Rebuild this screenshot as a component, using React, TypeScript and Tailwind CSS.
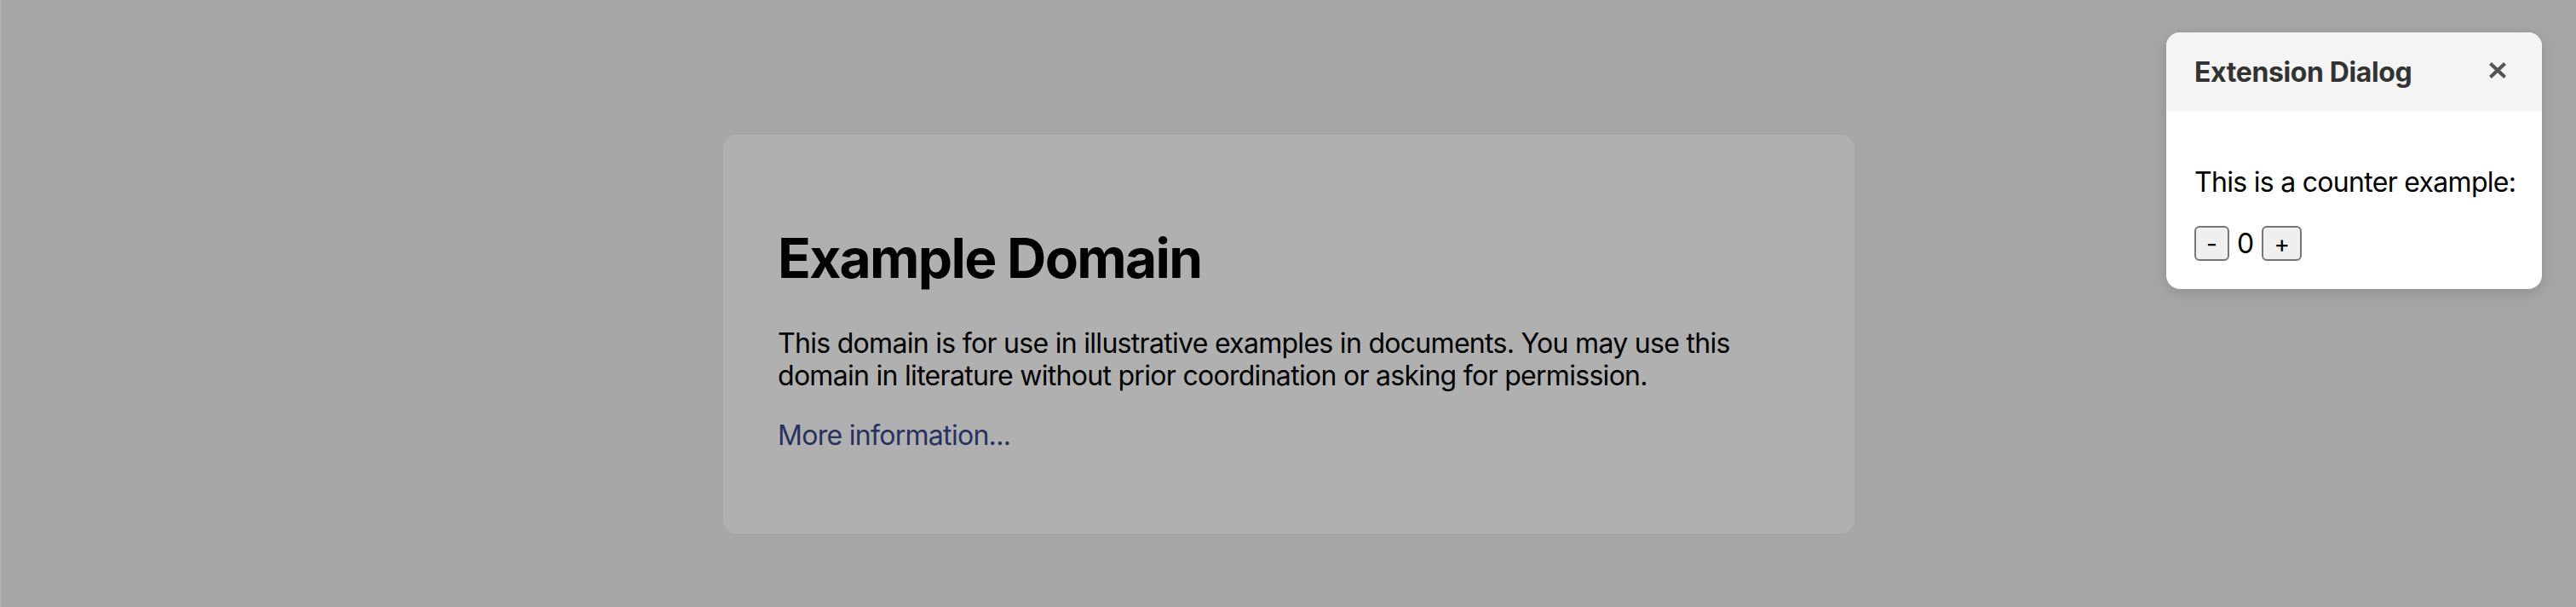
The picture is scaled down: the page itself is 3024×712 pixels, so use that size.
export default function App() {
  return (
    <div className="relative h-[712px] w-full overflow-hidden bg-[#a6a6a8] border-l-2 border-[#b2b2b3] font-['Inter','Liberation_Sans',sans-serif]">
      {/* page underneath the overlay */}
      <div className="mx-auto mt-[158px] w-[1328px] rounded-[16px] bg-[#b0b0b1] p-[64px]">
        <h1 className="my-[43px] text-[64px] font-bold leading-[76px] tracking-[-0.026em] text-black">Example Domain</h1>
        <p className="my-[32px] text-[32px] leading-[38px] tracking-[-0.022em] text-black">
          This domain is for use in illustrative examples in documents. You may use this domain in literature
          without prior coordination or asking for permission.
        </p>
        <p className="my-[32px] text-[32px] leading-[38px] tracking-[-0.022em]">
          <a href="#" className="text-[#27325f]">More information...</a>
        </p>
      </div>

      {/* extension dialog */}
      <div className="absolute right-[40px] top-[38px] w-[441px] overflow-hidden rounded-[16px] bg-white shadow-[0_4px_16px_rgba(0,0,0,0.14)]">
        <div className="flex h-[93px] items-center justify-between bg-[#f4f4f4] pl-[33px] pr-[42px]">
          <span className="text-[32px] font-bold leading-[38px] tracking-[-0.012em] text-[#333]">Extension Dialog</span>
          <svg width="20" height="19" viewBox="0 0 20 19" className="mb-[4px]">
            <path d="M3 3 L17 16 M17 3 L3 16" stroke="#555" strokeWidth="4.2" strokeLinecap="square" />
          </svg>
        </div>
        <div className="px-[33px] pb-[33px] pt-[32px]">
          <p className="my-[32px] whitespace-nowrap text-[32px] leading-[38px] tracking-[-0.022em] text-black">This is a counter example:</p>
          <div className="flex items-center gap-[9px]">
            <button className="flex h-[41px] w-[41px] items-center justify-center rounded-[6px] border-2 border-[#767676] bg-[#efefef] text-[28px] leading-none text-black">
              -
            </button>
            <span className="text-[32px] leading-[38px] text-black">0</span>
            <button className="flex h-[41px] w-[47px] items-center justify-center rounded-[6px] border-2 border-[#767676] bg-[#efefef] text-[28px] leading-none text-black">
              +
            </button>
          </div>
        </div>
      </div>
    </div>
  );
}
